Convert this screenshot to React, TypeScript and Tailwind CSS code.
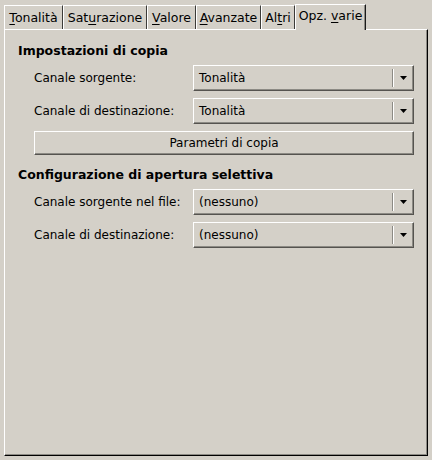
import type { ReactNode } from "react";

const tabs: { label: ReactNode; w: string; active?: boolean }[] = [
  { label: <><u>T</u>onalità</>, w: "w-[59px]" },
  { label: <>Sat<u>u</u>razione</>, w: "w-[84px]" },
  { label: <><u>V</u>alore</>, w: "w-[49px]" },
  { label: <><u>A</u>vanzate</>, w: "w-[65px]" },
  { label: <>Al<u>t</u>ri</>, w: "w-[34px]" },
  { label: <>Opz. <u>v</u>arie</>, w: "w-[71px]", active: true },
];

export default function App() {
  return (
    <div
      className="h-[460px] w-[432px] bg-[#d4d0c8] px-[4px] pt-[4px] text-[12px] text-black"
      style={{ fontFamily: '"DejaVu Sans", sans-serif' }}
    >
      {/* tab strip */}
      <div className="flex h-[25px] items-end">
        {tabs.map((t, i) =>
          t.active ? (
            <div
              key={i}
              className={`${t.w} relative z-10 -mb-px flex h-[26px] items-center justify-center border-l border-t border-r border-l-white border-t-white border-r-[#1a1a1a] bg-[#d4d0c8] pb-[2px] shadow-[inset_-1px_0_0_#8c8a84]`}
            >
              <span className="text-[12.5px] underline-offset-2">{t.label}</span>
            </div>
          ) : (
            <div
              key={i}
              className={`${t.w} flex h-[24px] items-center justify-center border-l border-t border-r border-l-white border-t-white border-r-[#3c3b38] bg-[#d4d0c8] pt-[1px]`}
            >
              <span className="text-[12.5px] underline-offset-2">{t.label}</span>
            </div>
          )
        )}
      </div>

      {/* panel */}
      <div className="h-[427px] border border-l-white border-t-white border-r-black border-b-black px-[13px] pt-[13px] shadow-[inset_-1px_-1px_0_#8c8a84]">
        <h2 className="h-[16px] text-[12.5px] font-bold leading-[16px]">Impostazioni di copia</h2>
        <div className="mt-[6px] flex flex-col gap-[7px] pl-[16px]">
          <Row label="Canale sorgente:" value="Tonalità" />
          <Row label="Canale di destinazione:" value="Tonalità" />
          <Button>Parametri di copia</Button>
        </div>

        <h2 className="mt-[12px] h-[16px] text-[12.5px] font-bold leading-[16px]">
          Configurazione di apertura selettiva
        </h2>
        <div className="mt-[6px] flex flex-col gap-[7px] pl-[16px]">
          <Row label="Canale sorgente nel file:" value="(nessuno)" />
          <Row label="Canale di destinazione:" value="(nessuno)" />
        </div>
      </div>
    </div>
  );
}

function Row({ label, value }: { label: string; value: string }) {
  return (
    <div className="flex items-center">
      <span className="w-[159px] shrink-0 whitespace-nowrap">{label}</span>
      <Combo value={value} />
    </div>
  );
}

function Combo({ value }: { value: string }) {
  return (
    <div className="flex h-[26px] flex-1 items-center border border-l-white border-t-white border-r-[#55534f] border-b-[#55534f] pl-[5px] shadow-[inset_-1px_-1px_0_#8c8a84]">
      <span className="flex-1 whitespace-nowrap">{value}</span>
      <span className="h-[18px] w-px bg-[#8c8a84]" />
      <span className="h-[18px] w-px bg-white" />
      <span className="flex w-[19px] justify-center pr-[1px]">
        <svg width="7" height="4" viewBox="0 0 7 4" aria-hidden="true">
          <path d="M0 0h7L3.5 4z" fill="#000" />
        </svg>
      </span>
    </div>
  );
}

function Button({ children }: { children: ReactNode }) {
  return (
    <div className="flex h-[24px] items-center justify-center border border-l-white border-t-white border-r-[#55534f] border-b-[#55534f] shadow-[inset_-1px_-1px_0_#8c8a84]">
      {children}
    </div>
  );
}
